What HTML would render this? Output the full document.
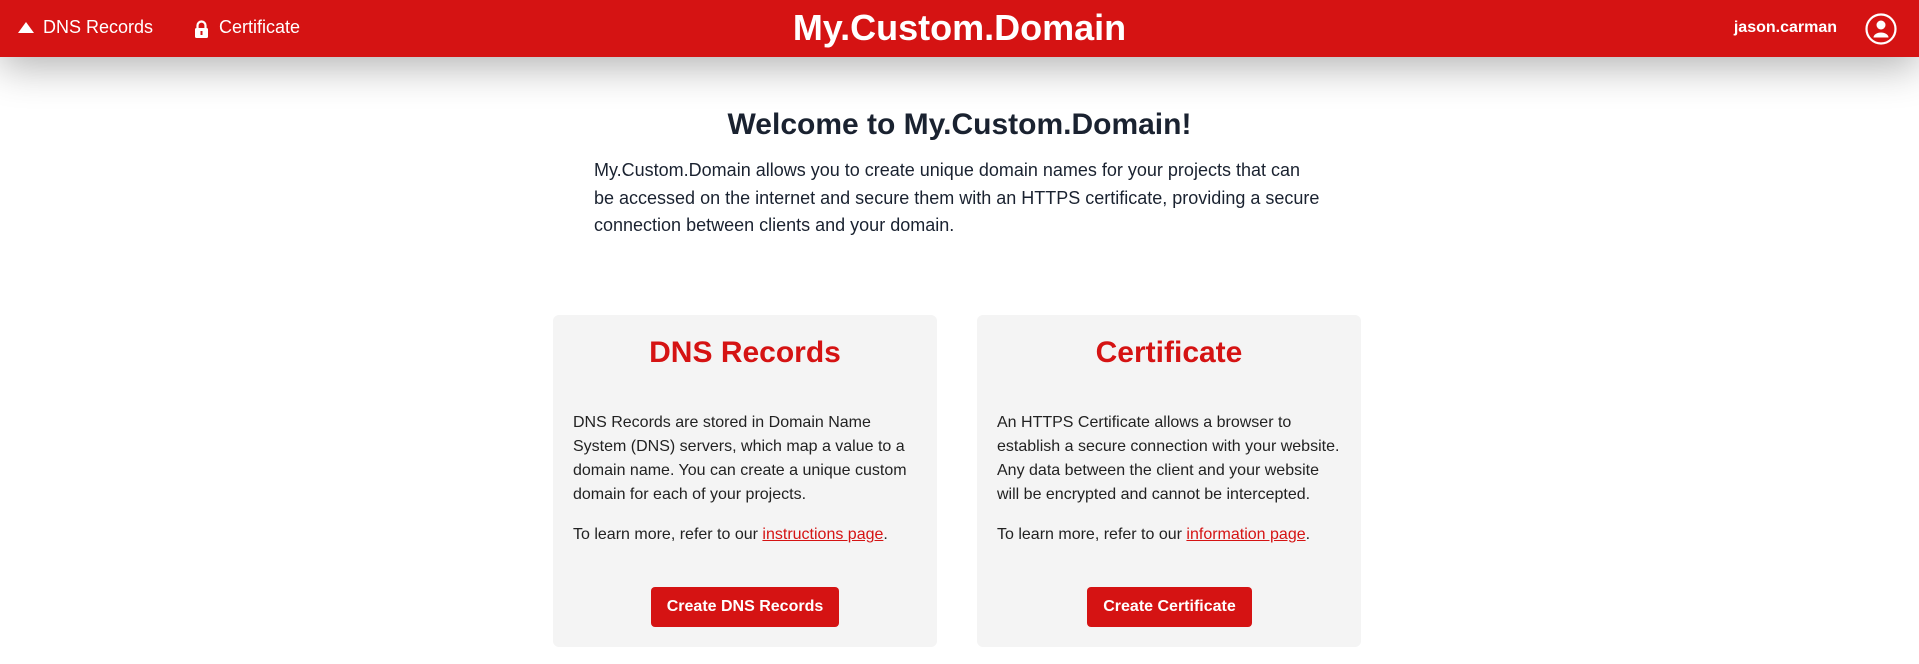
<!DOCTYPE html>
<html><head><style>
*{margin:0;padding:0;box-sizing:border-box}
body{width:1919px;height:664px;overflow:hidden;background:#fff;font-family:"Liberation Sans",Arial,sans-serif;color:#222}
.hdr{position:absolute;left:0;top:0;width:1919px;height:57px;background:#d51313;box-shadow:0 10px 40px rgba(0,0,0,.3);color:#fff}
.nav{position:absolute;top:17px;font-size:18px}
.title{position:absolute;left:0;width:1919px;text-align:center;top:7px;font-size:36px;font-weight:bold}
.user{position:absolute;right:82px;top:19px;font-size:16px;font-weight:bold}
h1{position:absolute;top:108px;width:1919px;text-align:center;font-size:30px;color:#1a2230}
.intro{position:absolute;left:594px;top:157px;width:730px;font-size:18px;line-height:27.5px;color:#1a2230}
.card{position:absolute;top:315px;width:384px;height:332px;background:#f4f4f4;border-radius:6px;padding:0 20px}
.card h2{text-align:center;color:#d51313;font-size:30px;margin-top:21px;height:34px}
.card p{font-size:16px;line-height:24px;color:#222}
.card p.a{margin-top:41px}
.card p.b{margin-top:16px}
.card a{color:#d51313}
.btn{position:absolute;top:272px;height:40px;background:#d51313;color:#fff;border-radius:4px;font-weight:bold;font-size:16px;line-height:40px;text-align:center}
</style></head><body>
<div class="hdr">
 <svg style="position:absolute;left:18px;top:22px" width="16" height="12"><polygon points="8,0 16,11 0,11" fill="#fff"/></svg>
 <div class="nav" style="left:43px">DNS Records</div>
 <svg style="position:absolute;left:194px;top:20px" width="15" height="18"><path d="M3.5 8V5.5a4 4 0 0 1 8 0V8" stroke="#fff" stroke-width="2.2" fill="none"/><rect x="1" y="8" width="13" height="10" rx="1.5" fill="#fff"/><rect x="6.5" y="11" width="2" height="4" fill="#d51313"/></svg>
 <div class="nav" style="left:219px">Certificate</div>
 <div class="title">My.Custom.Domain</div>
 <div class="user">jason.carman</div>
 <svg style="position:absolute;left:1865px;top:13px" width="32" height="32"><circle cx="16" cy="16" r="14.5" stroke="#fff" stroke-width="2.2" fill="none"/><circle cx="16" cy="12" r="4.5" fill="#fff"/><path d="M8.5 24.5a7.5 5 0 0 1 15 0z" fill="#fff"/></svg>
</div>
<h1>Welcome to My.Custom.Domain!</h1>
<div class="intro">My.Custom.Domain allows you to create unique domain names for your projects that can be accessed on the internet and secure them with an HTTPS certificate, providing a secure connection between clients and your domain.</div>
<div class="card" style="left:553px">
 <h2>DNS Records</h2>
 <p class="a">DNS Records are stored in Domain Name System (DNS) servers, which map a value to a domain name. You can create a unique custom domain for each of your projects.</p>
 <p class="b">To learn more, refer to our <a href="#">instructions page</a>.</p>
 <div class="btn" style="left:98px;width:188px">Create DNS Records</div>
</div>
<div class="card" style="left:977px">
 <h2>Certificate</h2>
 <p class="a">An HTTPS Certificate allows a browser to establish a secure connection with your website. Any data between the client and your website will be encrypted and cannot be intercepted.</p>
 <p class="b">To learn more, refer to our <a href="#">information page</a>.</p>
 <div class="btn" style="left:110px;width:165px">Create Certificate</div>
</div>
</body></html>
